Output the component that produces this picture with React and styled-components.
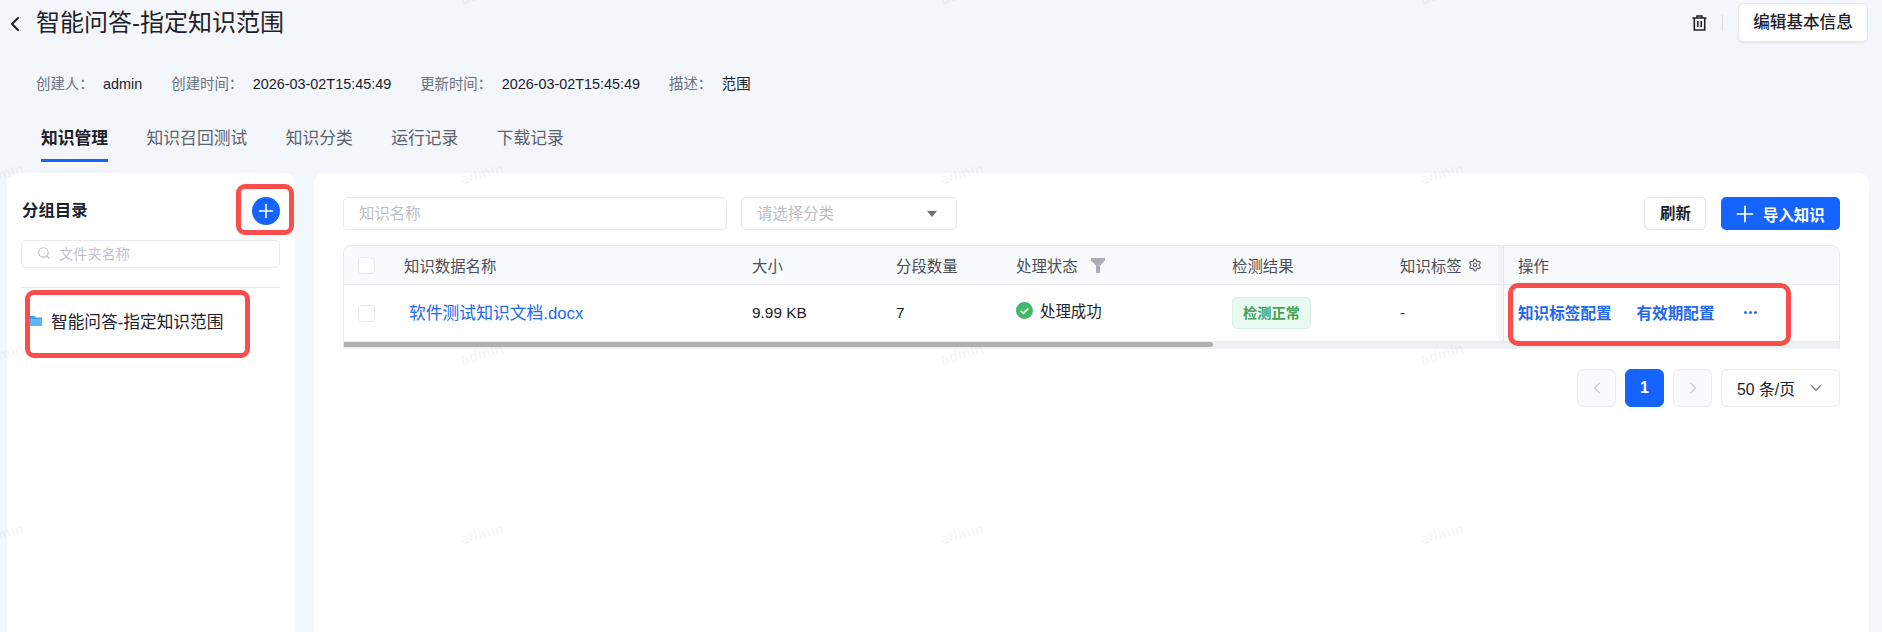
import React from 'react';
import styled, { createGlobalStyle } from 'styled-components';
import { ChevronLeft, ChevronRight, ChevronDown, Search, Settings, Plus } from 'lucide-react';

const GlobalStyle = createGlobalStyle`
  html, body {
    margin: 0;
    padding: 0;
    background: #f3f6fb;
  }
  body {
    font-family: "Liberation Sans", "Noto Sans CJK SC", sans-serif;
    color: #1d2129;
  }
  * { box-sizing: border-box; }
`;

const COLUMNS = '47px 348px 144px 120px 216px 168px 116px 1fr';
const TABS = ['知识管理', '知识召回测试', '知识分类', '运行记录', '下载记录'];
const META = [
  ['创建人：', 'admin'],
  ['创建时间：', '2026-03-02T15:45:49'],
  ['更新时间：', '2026-03-02T15:45:49'],
  ['描述：', '范围'],
];

const App = () => {
  return (
    <Page>
      <GlobalStyle />
      <TopBar>
        <BackButton><ChevronLeft size={24} strokeWidth={2} /></BackButton>
        <Title>智能问答-指定知识范围</Title>
        <TopActions>
          <TrashIcon />
          <TopDivider />
          <EditButton>编辑基本信息</EditButton>
        </TopActions>
      </TopBar>

      <MetaRow>
        {META.map(([label, value]) => (
          <MetaItem key={label}>
            <MetaLabel>{label}</MetaLabel>
            <span>{value}</span>
          </MetaItem>
        ))}
      </MetaRow>

      <TabBar>
        {TABS.map((tab, index) => (
          <Tab key={tab} selected={index === 0}>{tab}</Tab>
        ))}
      </TabBar>

      <Panels>
        <SidePanel>
          <SideHeader>
            <SideTitle>分组目录</SideTitle>
            <MarkedAdd>
              <AddButton><Plus size={22} strokeWidth={1.8} /></AddButton>
            </MarkedAdd>
          </SideHeader>
          <FolderSearch>
            <Search size={14} strokeWidth={2} />
            <span>文件夹名称</span>
          </FolderSearch>
          <SideDivider />
          <MarkedTreeRow>
            <FolderIcon />
            <span>智能问答-指定知识范围</span>
          </MarkedTreeRow>
        </SidePanel>

        <MainPanel>
          <Toolbar>
            <NameInput>知识名称</NameInput>
            <CategorySelect>
              <span>请选择分类</span>
              <Caret />
            </CategorySelect>
            <ToolbarRight>
              <RefreshButton>刷新</RefreshButton>
              <ImportButton><Plus size={26} strokeWidth={1.6} />导入知识</ImportButton>
            </ToolbarRight>
          </Toolbar>

          <Table>
            <HeadRow>
              <CheckCell><Checkbox /></CheckCell>
              <HeadCell>知识数据名称</HeadCell>
              <HeadCell>大小</HeadCell>
              <HeadCell>分段数量</HeadCell>
              <HeadCell>处理状态<FilterIcon /></HeadCell>
              <HeadCell>检测结果</HeadCell>
              <HeadCell>知识标签<GearWrap><Settings size={14} strokeWidth={2} /></GearWrap></HeadCell>
              <OpHeadCell>操作</OpHeadCell>
            </HeadRow>
            <BodyRow>
              <CheckCell><Checkbox /></CheckCell>
              <BodyCell><FileLink>软件测试知识文档.docx</FileLink></BodyCell>
              <BodyCell>9.99 KB</BodyCell>
              <BodyCell>7</BodyCell>
              <BodyCell>
                <StatusGroup><StatusIcon /><span>处理成功</span></StatusGroup>
              </BodyCell>
              <BodyCell><ResultTag>检测正常</ResultTag></BodyCell>
              <BodyCell>-</BodyCell>
              <OpCell>
                <OpLink>知识标签配置</OpLink>
                <OpLink>有效期配置</OpLink>
                <MoreDots><i /><i /><i /></MoreDots>
                <OpMark />
              </OpCell>
            </BodyRow>
            <ScrollTrack><ScrollThumb /></ScrollTrack>
          </Table>

          <Pagination>
            <PageArrow><ChevronLeft size={20} strokeWidth={1.4} /></PageArrow>
            <PageNumber>1</PageNumber>
            <PageArrow><ChevronRight size={20} strokeWidth={1.4} /></PageArrow>
            <PageSize>
              <span>50 条/页</span>
              <ChevronDown size={18} strokeWidth={1.5} />
            </PageSize>
          </Pagination>
        </MainPanel>
      </Panels>

      <WatermarkLayer>
        {Array.from({ length: 25 }).map((_, index) => (
          <Watermark key={index}>admin</Watermark>
        ))}
      </WatermarkLayer>
    </Page>
  );
};

const TrashIcon = () => (
  <svg width="15" height="16" viewBox="0 0 15 16" fill="none" stroke="#1d2129" strokeWidth="1.6">
    <path d="M0.5 3h14M5 3V1h5v2M2.3 3v12h10.4V3M5.8 6v6M9.2 6v6" />
  </svg>
);

const FolderIcon = () => (
  <svg width="12" height="11" viewBox="0 0 12 11">
    <path d="M0 1h4.5l1.5 1.5H12V10a1 1 0 0 1-1 1H0z" fill="#3ea2f7" />
    <path d="M0 4h12v6a1 1 0 0 1-1 1H0z" fill="#5cb6fa" />
  </svg>
);

const FilterIcon = () => (
  <FilterSvg width="14" height="15" viewBox="0 0 14 15">
    <path d="M0 0h14v2.5L9 7.5V15H5V7.5L0 2.5z" fill="#a9adb8" />
  </FilterSvg>
);

const StatusIcon = () => (
  <svg width="17" height="17" viewBox="0 0 17 17">
    <circle cx="8.5" cy="8.5" r="8.5" fill="#43b868" />
    <path d="M4.8 8.8l2.6 2.5 4.8-4.8" fill="none" stroke="#fff" strokeWidth="1.8" />
  </svg>
);

const Page = styled.div`
  position: relative;
  display: flex;
  flex-direction: column;
  width: 100%;
  height: 632px;
  overflow: hidden;
  background: #f3f6fb;
`;

const TopBar = styled.div`
  display: flex;
  align-items: center;
  padding: 3px 14px 0 3px;
`;

const BackButton = styled.div`
  display: flex;
  width: 25px;
  margin-top: 3px;
  color: #1d2129;
`;

const Title = styled.div`
  margin: 1px 0 0 8px;
  font-size: 24px;
  line-height: 32px;
  color: #1d2129;
`;

const TopActions = styled.div`
  display: flex;
  align-items: center;
  margin-left: auto;
`;

const TopDivider = styled.div`
  width: 1px;
  height: 16px;
  margin: 0 15px 0 15px;
  background: #d9dce3;
`;

const EditButton = styled.div`
  width: 130px;
  height: 39px;
  line-height: 37px;
  text-align: center;
  font-size: 16.6px;
  font-weight: 500;
  color: #1d2129;
  background: #fff;
  border: 1px solid #e6e8ee;
  border-radius: 5px;
  box-shadow: 0 1px 2px rgba(0, 0, 0, 0.06);
`;

const MetaRow = styled.div`
  display: flex;
  gap: 29px;
  height: 20px;
  margin-top: 32px;
  padding-left: 36px;
  font-size: 14.4px;
  line-height: 20px;
  color: #1d2129;
`;

const MetaItem = styled.div`
  display: flex;
`;

const MetaLabel = styled.span`
  margin-right: 9.5px;
  color: #6b7280;
`;

const TabBar = styled.div`
  display: flex;
  gap: 38.4px;
  margin-top: 32px;
  padding-left: 41px;
`;

const Tab = styled.div`
  height: 36px;
  font-size: 16.8px;
  line-height: 26px;
  font-weight: ${(props) => (props.selected ? 700 : 400)};
  color: ${(props) => (props.selected ? '#1d2129' : '#5c6370')};
  border-bottom: 3px solid ${(props) => (props.selected ? '#1664ff' : 'transparent')};
`;

const Panels = styled.div`
  display: flex;
  flex: 1;
  gap: 19px;
  margin-top: 11px;
  padding: 0 13px 0 7px;
`;

const SidePanel = styled.div`
  width: 288px;
  background: #fff;
  border-radius: 10px 10px 0 0;
`;

const SideHeader = styled.div`
  display: flex;
  align-items: center;
  justify-content: space-between;
  padding: 11px 1px 0 15px;
`;

const SideTitle = styled.div`
  margin-top: -2px;
  font-size: 16.4px;
  font-weight: 700;
  color: #1d2129;
`;

const MarkedAdd = styled.div`
  display: flex;
  align-items: center;
  justify-content: center;
  width: 58px;
  height: 51px;
  padding: 3px 0 0 2px;
  border: 5px solid #fb4d4b;
  border-radius: 9px;
`;

const AddButton = styled.div`
  display: flex;
  align-items: center;
  justify-content: center;
  width: 28px;
  height: 28px;
  color: #fff;
  background: #1664ff;
  border-radius: 50%;
`;

const FolderSearch = styled.div`
  display: flex;
  align-items: center;
  gap: 8px;
  height: 28px;
  margin: 5px 15px 0 14px;
  padding: 0 0 2px 15px;
  font-size: 14.2px;
  color: #bfc3cd;
  border: 1px solid #e8eaf0;
  border-radius: 5px;
`;

const SideDivider = styled.div`
  height: 1px;
  margin: 19px 15px 0 14px;
  background: #e8eaf0;
`;

const MarkedTreeRow = styled.div`
  display: flex;
  align-items: center;
  gap: 9px;
  width: 225px;
  height: 68px;
  margin: 2px 0 0 18px;
  padding-bottom: 7px;
  font-size: 16.7px;
  color: #1d2129;
  border: 5px solid #fb4d4b;
  border-radius: 9px;
`;

const MainPanel = styled.div`
  flex: 1;
  padding: 24px 29px 0;
  background: #fff;
  border-radius: 10px 10px 0 0;
`;

const Toolbar = styled.div`
  display: flex;
  align-items: flex-start;
  gap: 14px;
`;

const NameInput = styled.div`
  width: 384px;
  height: 33px;
  padding-left: 15px;
  font-size: 15.4px;
  line-height: 31px;
  color: #bdbfc5;
  border: 1px solid #e8eaf0;
  border-radius: 5px;
`;

const CategorySelect = styled(NameInput)`
  display: flex;
  align-items: center;
  justify-content: space-between;
  width: 216px;
  padding-right: 19px;
`;

const Caret = styled.i`
  width: 0;
  height: 0;
  border-left: 5.5px solid transparent;
  border-right: 5.5px solid transparent;
  border-top: 6px solid #6b7280;
`;

const ToolbarRight = styled.div`
  display: flex;
  gap: 15px;
  margin-left: auto;
`;

const RefreshButton = styled.div`
  width: 62px;
  height: 33px;
  padding-left: 1px;
  line-height: 31px;
  text-align: center;
  font-size: 15.4px;
  font-weight: 700;
  color: #1d2129;
  background: #fff;
  border: 1px solid #e2e4ea;
  border-radius: 5px;
`;

const ImportButton = styled.div`
  display: flex;
  align-items: center;
  gap: 5px;
  width: 119px;
  height: 33px;
  padding-left: 11px;
  font-size: 15.4px;
  font-weight: 700;
  color: #fff;
  background: #1664ff;
  border-radius: 5px;
`;

const Table = styled.div`
  margin-top: 15px;
  border: 1px solid #e9ebf0;
  border-bottom: none;
  border-radius: 8px 8px 0 0;
  overflow: hidden;
`;

const HeadRow = styled.div`
  display: grid;
  grid-template-columns: ${COLUMNS};
  height: 39px;
  background: #f9fafc;
  border-bottom: 1px solid #e9ebf0;
`;

const BodyRow = styled.div`
  display: grid;
  grid-template-columns: ${COLUMNS};
  height: 57px;
  background: #fff;
  border-bottom: 1px solid #e9ebf0;
`;

const CheckCell = styled.div`
  display: flex;
  align-items: center;
  padding-left: 14px;
`;

const Checkbox = styled.div`
  width: 17px;
  height: 17px;
  background: #fff;
  border: 1px solid #e6e8ee;
  border-radius: 4px;
`;

const HeadCell = styled.div`
  display: flex;
  align-items: center;
  padding-left: 13px;
  font-size: 15.4px;
  color: #4a4f5a;
`;

const BodyCell = styled.div`
  display: flex;
  align-items: center;
  padding-left: 13px;
  font-size: 15.4px;
  color: #1d2129;
`;

const OpHeadCell = styled(HeadCell)`
  padding-left: 14px;
  border-left: 1px solid #e4e6ea;
  box-shadow: -5px 0 0 #f1f2f4;
`;

const OpCell = styled(BodyCell)`
  position: relative;
  padding: 0 0 2px 14px;
  border-left: 1px solid #e4e6ea;
  box-shadow: -5px 0 0 #f6f7f8;
`;

const OpLink = styled.span`
  margin-right: 25px;
  font-size: 15.6px;
  font-weight: 700;
  color: #2468f2;
`;

const MoreDots = styled.span`
  display: flex;
  gap: 2px;
  margin-left: 4px;

  i {
    width: 3px;
    height: 3px;
    background: #2468f2;
    border-radius: 50%;
  }
`;

const OpMark = styled.div`
  position: absolute;
  left: 4px;
  top: -2px;
  width: 283px;
  height: 63px;
  border: 5px solid #fb4d4b;
  border-radius: 10px;
`;

const FileLink = styled.span`
  padding: 0 0 2px 5px;
  font-size: 16.8px;
  color: #2468f2;
`;

const FilterSvg = styled.svg`
  margin-left: 13px;
`;

const GearWrap = styled.span`
  display: flex;
  margin-left: 6px;
  color: #5c6370;
`;

const StatusGroup = styled.span`
  display: flex;
  align-items: center;
  gap: 7px;
  margin-top: -6px;
`;

const ResultTag = styled.span`
  width: 79px;
  height: 32px;
  line-height: 30px;
  text-align: center;
  font-size: 14.2px;
  font-weight: 700;
  color: #4a9f55;
  background: #e9fbf1;
  border: 1px solid #d6f4e3;
  border-radius: 5px;
`;

const ScrollTrack = styled.div`
  height: 7px;
  background: #eef0f4;
`;

const ScrollThumb = styled.div`
  width: 869px;
  height: 5px;
  background: #b0b0b0;
  border-radius: 0 3px 3px 0;
`;

const Pagination = styled.div`
  display: flex;
  justify-content: flex-end;
  gap: 9px;
  margin-top: 20px;
`;

const PageArrow = styled.div`
  display: flex;
  align-items: center;
  justify-content: center;
  width: 39px;
  height: 38px;
  color: #c4c8d0;
  background: #f9fafc;
  border: 1px solid #eceef2;
  border-radius: 6px;
`;

const PageNumber = styled(PageArrow)`
  font-size: 16px;
  font-weight: 700;
  color: #fff;
  background: #1664ff;
  border-color: #1664ff;
`;

const PageSize = styled.div`
  display: flex;
  align-items: center;
  justify-content: space-between;
  width: 119px;
  height: 38px;
  padding: 0 14px 0 15px;
  font-size: 15.8px;
  color: #1d2129;
  border: 1px solid #eceef2;
  border-radius: 6px;

  svg {
    color: #6b7280;
  }
`;

const WatermarkLayer = styled.div`
  position: absolute;
  top: -97px;
  left: -238px;
  display: grid;
  grid-template-columns: repeat(5, 480px);
  grid-auto-rows: 180px;
  place-items: center;
  pointer-events: none;
`;

const Watermark = styled.span`
  font-size: 15px;
  font-weight: 700;
  color: rgba(0, 0, 0, 0.05);
  transform: rotate(-15deg);
`;

export default App;
